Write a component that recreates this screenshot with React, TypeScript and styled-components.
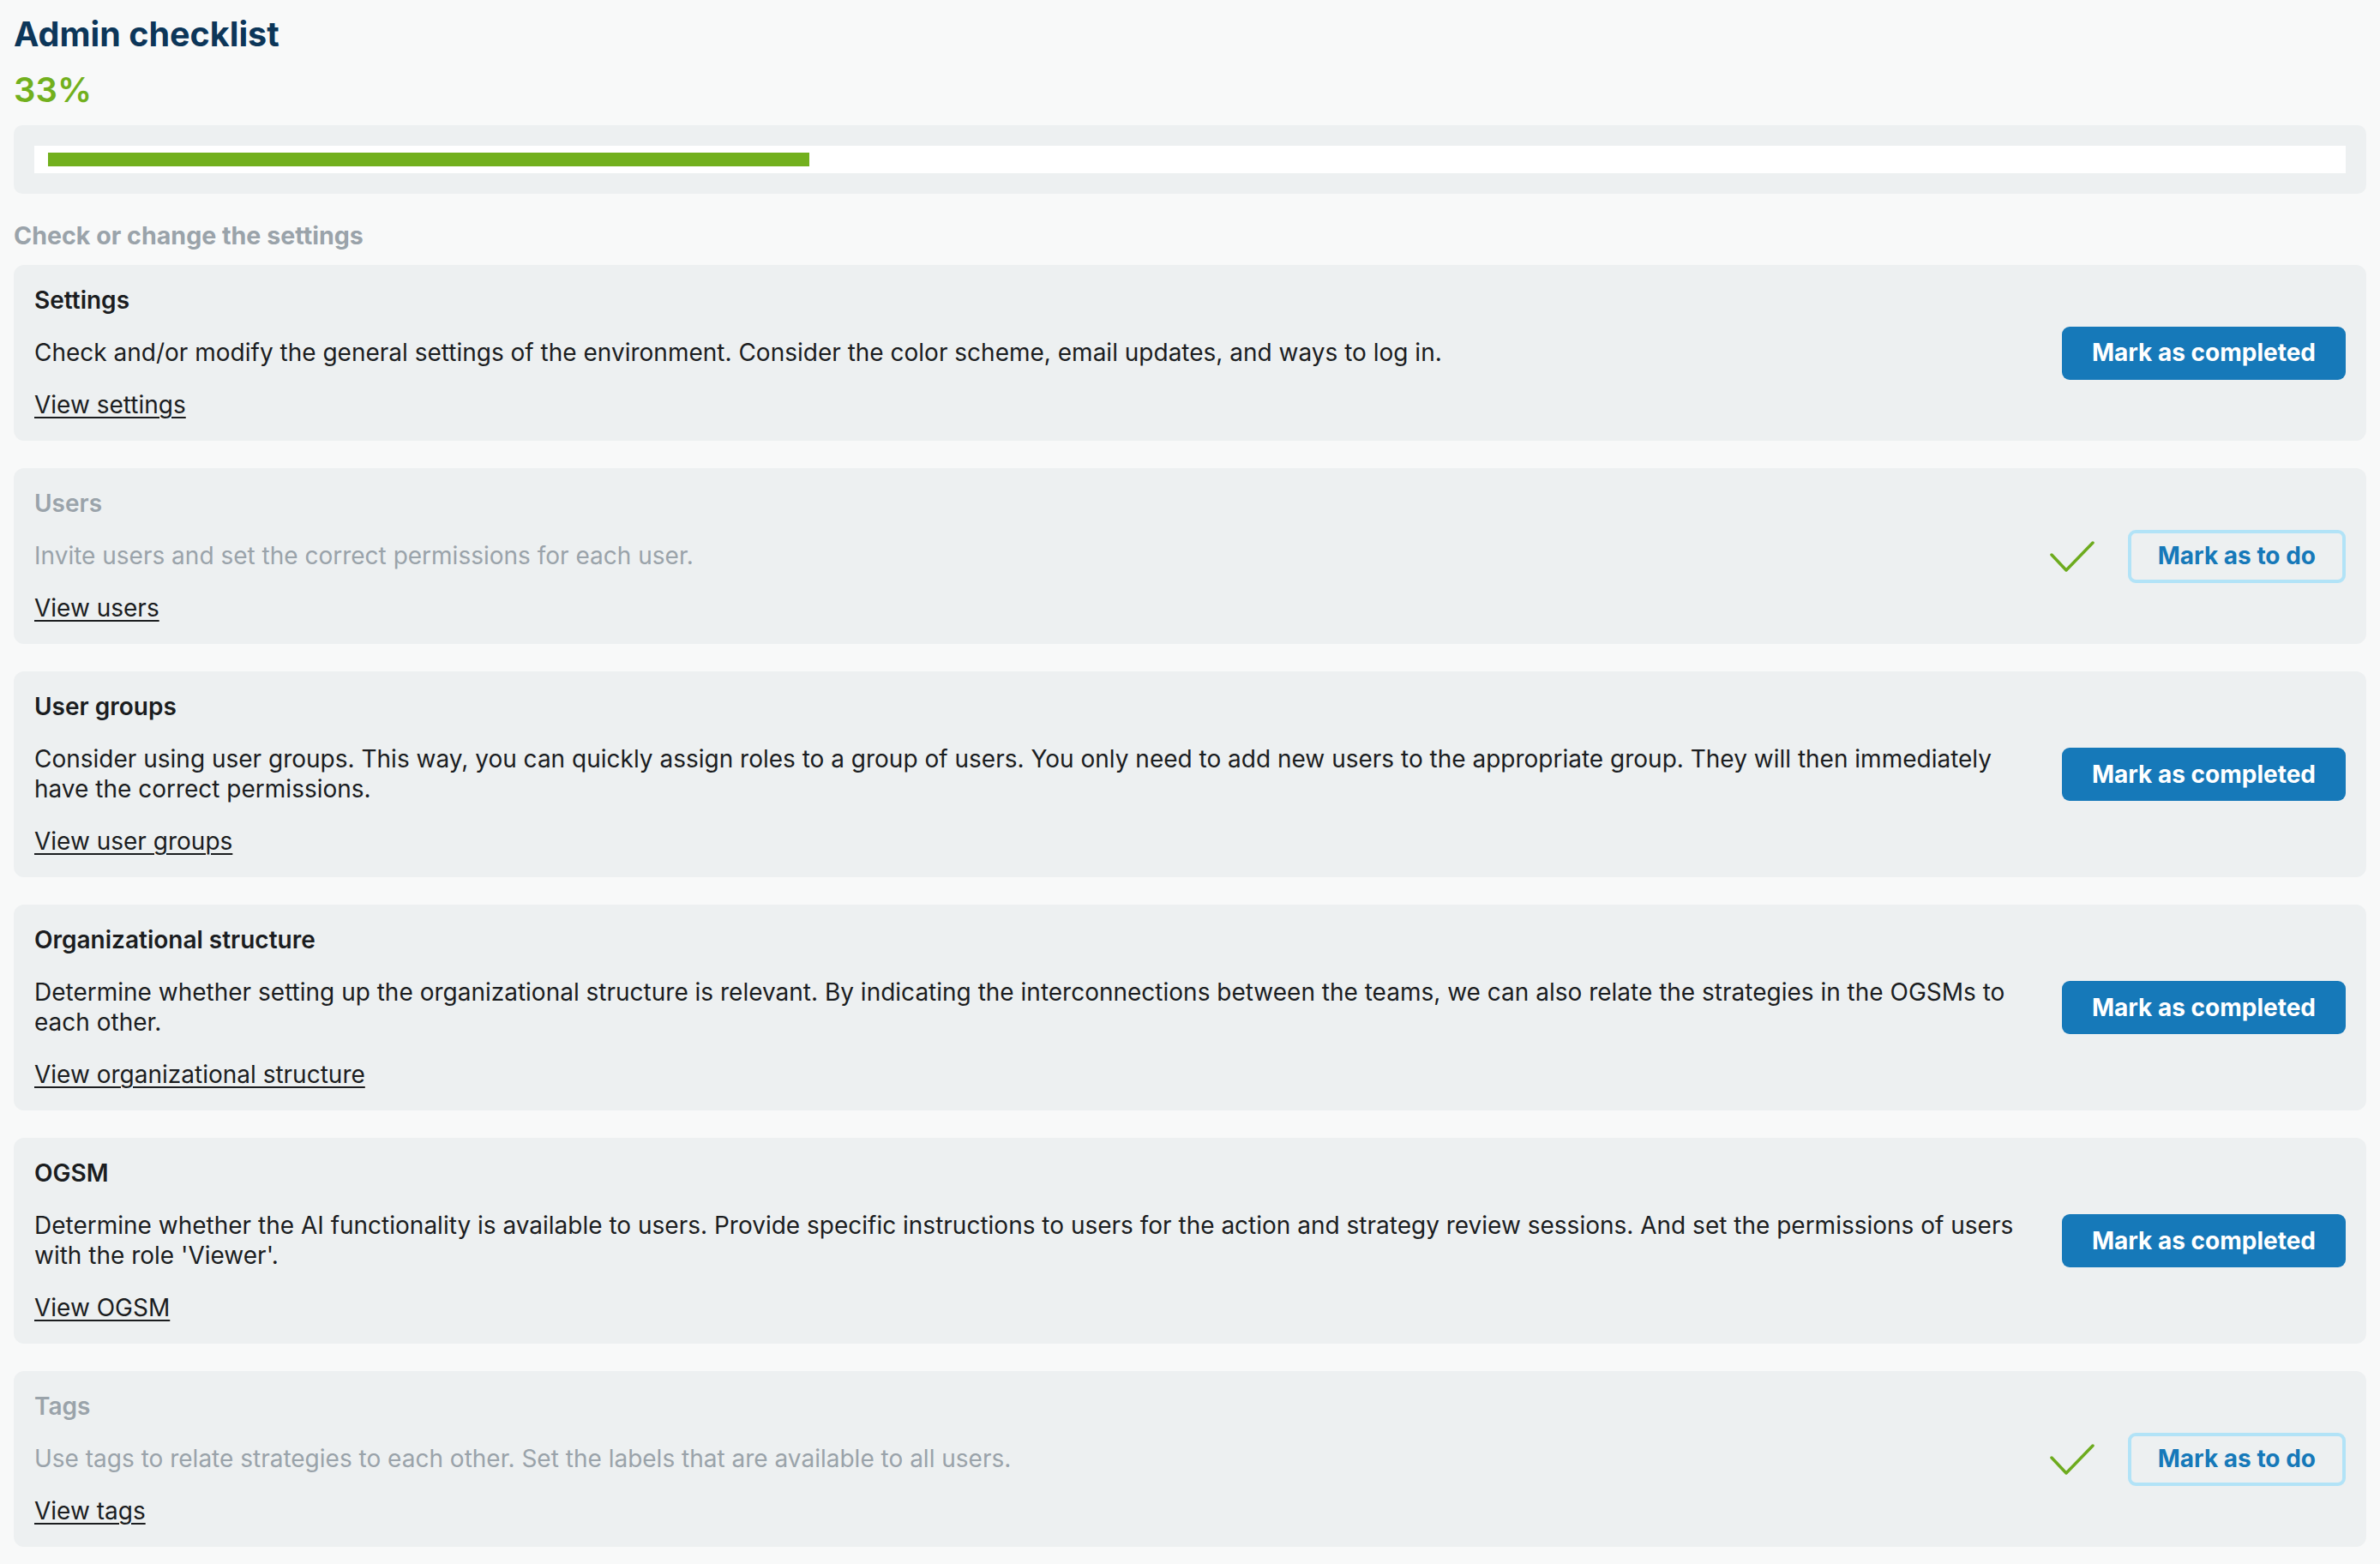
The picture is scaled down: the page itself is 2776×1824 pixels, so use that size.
import React from "react";
import styled, { createGlobalStyle } from "styled-components";

const GlobalStyle = createGlobalStyle`
  html, body {
    margin: 0;
    padding: 0;
    background: #f8f9f9;
    font-family: Inter, "Noto Sans", "Liberation Sans", sans-serif;
    color: #1b1d1f;
  }
  * { box-sizing: border-box; }
`;

const Page = styled.main`
  display: flex;
  flex-direction: column;
  padding: 16px 16px 19px;
`;

const Title = styled.h1`
  margin: 0;
  font-size: 39.5px;
  line-height: 48px;
  font-weight: 700;
  color: #0c3659;
`;

const Percent = styled.div`
  margin-top: 17px;
  font-size: 40px;
  line-height: 48px;
  font-weight: 600;
  color: #72b01d;
`;

const ProgressPanel = styled.div`
  margin-top: 17px;
  padding: 24px;
  background: #edf0f1;
  border-radius: 10px;
`;

const Track = styled.div`
  background: #ffffff;
  padding: 8px 16px;
`;

const Fill = styled.div`
  height: 16px;
  background: #72b01d;
`;

const SectionLabel = styled.div`
  margin-top: 31px;
  font-size: 28.6px;
  line-height: 35px;
  font-weight: 700;
  color: #9aa3aa;
`;

const List = styled.div`
  margin-top: 17px;
  display: flex;
  flex-direction: column;
  gap: 32px;
`;

const Card = styled.section`
  display: flex;
  align-items: center;
  gap: 32px;
  padding: 24px;
  background: #edf0f1;
  border-radius: 12px;
`;

const Content = styled.div`
  flex: 1;
  min-width: 0;
  display: flex;
  flex-direction: column;
  gap: 26px;
`;

const CardTitle = styled.div<{ $done: boolean }>`
  font-size: 28px;
  line-height: 35px;
  font-weight: 600;
  color: ${(p) => (p.$done ? "#9aa3aa" : "#1b1d1f")};
`;

const Description = styled.div<{ $done: boolean }>`
  font-size: 28px;
  line-height: 35px;
  font-weight: 400;
  color: ${(p) => (p.$done ? "#9aa3aa" : "#1b1d1f")};
`;

const LinkText = styled.a`
  align-self: flex-start;
  font-size: 28px;
  line-height: 35px;
  color: #1b1d1f;
  text-decoration: underline;
  text-underline-offset: 4px;
  text-decoration-thickness: 2px;
  cursor: pointer;
`;

const Actions = styled.div`
  display: flex;
  align-items: center;
  gap: 39px;
  flex-shrink: 0;
`;

const Button = styled.button<{ $variant: "primary" | "outline" }>`
  font-family: inherit;
  font-size: 28px;
  line-height: 35px;
  font-weight: 700;
  border-radius: 9px;
  cursor: pointer;
  height: 62px;
  padding: 0 ${(p) => (p.$variant === "primary" ? "35px" : "31px")};
  background: ${(p) => (p.$variant === "primary" ? "#1679b9" : "transparent")};
  color: ${(p) => (p.$variant === "primary" ? "#ffffff" : "#1679b9")};
  border: ${(p) =>
    p.$variant === "primary" ? "0" : "4px solid #b2e3f7"};
`;

const CheckIcon = () => (
  <svg width="52" height="36" viewBox="0 0 52 36" fill="none">
    <polyline
      points="2,16 19,34 50,2"
      stroke="#6dab1e"
      strokeWidth="3.5"
      strokeLinecap="round"
      strokeLinejoin="round"
    />
  </svg>
);

type Item = {
  title: string;
  description: string;
  link: string;
  done: boolean;
};

const items: Item[] = [
  {
    title: "Settings",
    description:
      "Check and/or modify the general settings of the environment. Consider the color scheme, email updates, and ways to log in.",
    link: "View settings",
    done: false,
  },
  {
    title: "Users",
    description: "Invite users and set the correct permissions for each user.",
    link: "View users",
    done: true,
  },
  {
    title: "User groups",
    description:
      "Consider using user groups. This way, you can quickly assign roles to a group of users. You only need to add new users to the appropriate group. They will then immediately have the correct permissions.",
    link: "View user groups",
    done: false,
  },
  {
    title: "Organizational structure",
    description:
      "Determine whether setting up the organizational structure is relevant. By indicating the interconnections between the teams, we can also relate the strategies in the OGSMs to each other.",
    link: "View organizational structure",
    done: false,
  },
  {
    title: "OGSM",
    description:
      "Determine whether the AI functionality is available to users. Provide specific instructions to users for the action and strategy review sessions. And set the permissions of users with the role 'Viewer'.",
    link: "View OGSM",
    done: false,
  },
  {
    title: "Tags",
    description:
      "Use tags to relate strategies to each other. Set the labels that are available to all users.",
    link: "View tags",
    done: true,
  },
];

export default function App() {
  const doneCount = items.filter((i) => i.done).length;
  const pct = (doneCount / items.length) * 100;
  return (
    <>
      <GlobalStyle />
      <Page>
        <Title>Admin checklist</Title>
        <Percent>{Math.round(pct)}%</Percent>
        <ProgressPanel>
          <Track>
            <Fill style={{ width: `${pct}%` }} />
          </Track>
        </ProgressPanel>
        <SectionLabel>Check or change the settings</SectionLabel>
        <List>
          {items.map((item) => (
            <Card key={item.title}>
              <Content>
                <CardTitle $done={item.done}>{item.title}</CardTitle>
                <Description $done={item.done}>{item.description}</Description>
                <LinkText>{item.link}</LinkText>
              </Content>
              <Actions>
                {item.done && <CheckIcon />}
                <Button $variant={item.done ? "outline" : "primary"}>
                  {item.done ? "Mark as to do" : "Mark as completed"}
                </Button>
              </Actions>
            </Card>
          ))}
        </List>
      </Page>
    </>
  );
}
